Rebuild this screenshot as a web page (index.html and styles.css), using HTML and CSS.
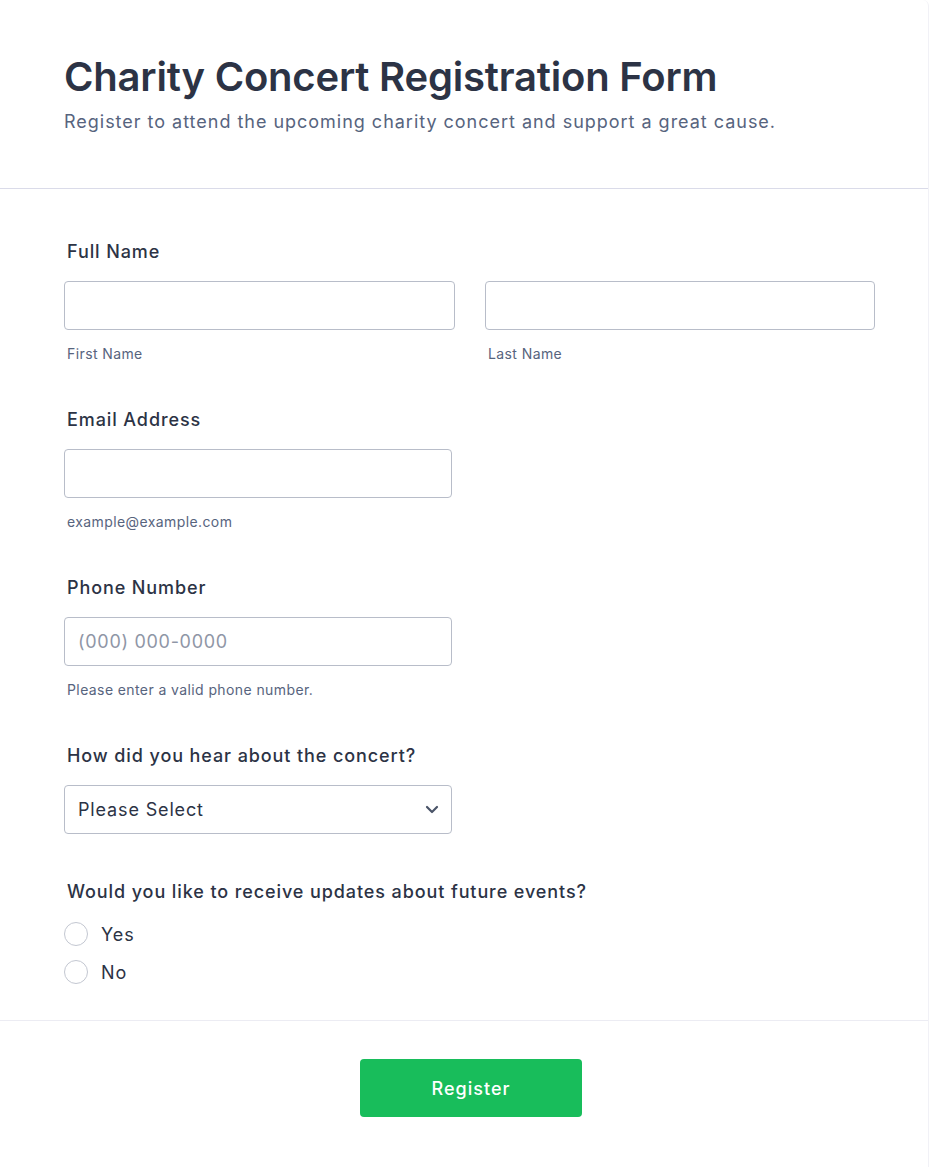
FILE: index.html
```html
<!DOCTYPE html>
<html lang="en">
<head>
<meta charset="utf-8">
<title>Charity Concert Registration Form</title>
<link rel="stylesheet" href="styles.css">
</head>
<body>
<div class="card">
  <header class="form-header">
    <h1 class="form-title">Charity Concert Registration Form</h1>
    <p class="form-subtitle">Register to attend the upcoming charity concert and support a great cause.</p>
  </header>
  <form class="form-body">
    <div class="field">
      <div class="label">Full Name</div>
      <div class="name-row">
        <div class="name-col">
          <input class="input" type="text">
          <div class="sublabel">First Name</div>
        </div>
        <div class="name-col">
          <input class="input" type="text">
          <div class="sublabel">Last Name</div>
        </div>
      </div>
    </div>
    <div class="field">
      <div class="label">Email Address</div>
      <input class="input half" type="email">
      <div class="sublabel">example@example.com</div>
    </div>
    <div class="field">
      <div class="label">Phone Number</div>
      <input class="input half" type="tel" placeholder="(000) 000-0000">
      <div class="sublabel">Please enter a valid phone number.</div>
    </div>
    <div class="field field-select">
      <div class="label">How did you hear about the concert?</div>
      <div class="select half">
        <span>Please Select</span>
        <svg class="chevron" width="14" height="9" viewBox="0 0 14 9"><path d="M2 2l5 5 5-5" fill="none" stroke="#4a5468" stroke-width="2.2" stroke-linecap="round" stroke-linejoin="round"/></svg>
      </div>
    </div>
    <div class="field field-radio">
      <div class="label">Would you like to receive updates about future events?</div>
      <div class="radios">
        <label class="radio-row"><span class="radio"></span><span>Yes</span></label>
        <label class="radio-row"><span class="radio"></span><span>No</span></label>
      </div>
    </div>
  </form>
  <footer class="form-footer">
    <button class="submit" type="button">Register</button>
  </footer>
</div>
</body>
</html>
```

FILE: styles.css
```css
html, body {
  margin: 0;
  padding: 0;
  background: #ffffff;
}
body {
  font-family: Inter, "Noto Sans", sans-serif;
  color: #2c3345;
}
.card {
  width: 929px;
  min-height: 1167px;
  box-sizing: border-box;
  border-right: 1px solid #f1f1f6;
  border-top-right-radius: 6px;
  background: #fff;
}
.form-header {
  padding: 53px 64px 54px;
  border-bottom: 1px solid #dadbe9;
}
.form-title {
  margin: 0;
  font-size: 40px;
  line-height: 48px;
  font-weight: 600;
  letter-spacing: -0.2px;
  color: #2c3345;
}
.form-subtitle {
  margin: 9px 0 0;
  font-size: 18px;
  line-height: 24px;
  font-weight: 400;
  letter-spacing: 0.98px;
  color: #57647e;
}
.form-body {
  padding: 51px 54px 0 64px;
  display: flex;
  flex-direction: column;
  border-bottom: 1px solid #ececf3;
}
.field {
  display: flex;
  flex-direction: column;
  padding-bottom: 44px;
}
.label {
  font-size: 18px;
  line-height: 24px;
  font-weight: 500;
  letter-spacing: 0.9px;
  padding-left: 3px;
  margin-bottom: 17px;
  color: #2c3345;
}
.name-row {
  display: grid;
  grid-template-columns: 391px 390px;
  column-gap: 30px;
}
.name-col {
  display: flex;
  flex-direction: column;
}
.input {
  box-sizing: border-box;
  height: 49px;
  width: 100%;
  border: 1px solid #b8bdc9;
  border-radius: 4px;
  padding: 0 13px;
  font-family: inherit;
  font-size: 18px;
  letter-spacing: 0.7px;
  color: #2c3345;
  background: #fff;
  outline: none;
}
.input::placeholder {
  color: #8f96a6;
}
.half {
  width: 388px;
}
.sublabel {
  margin-top: 14px;
  padding-left: 3px;
  font-size: 14px;
  line-height: 20px;
  letter-spacing: 0.4px;
  color: #57647e;
}
.field-select {
  padding-bottom: 46px;
}
.select {
  box-sizing: border-box;
  height: 49px;
  border: 1px solid #b8bdc9;
  border-radius: 4px;
  padding: 0 12px 0 13px;
  display: flex;
  align-items: center;
  justify-content: space-between;
  font-size: 18px;
  letter-spacing: 0.85px;
  color: #2c3345;
}
.field-radio {
  padding-bottom: 29px;
}
.field-radio .label {
  margin-bottom: 11px;
}
.radios {
  display: flex;
  flex-direction: column;
}
.radio-row {
  display: flex;
  align-items: center;
  gap: 13px;
  height: 38px;
  font-size: 18px;
  letter-spacing: 0.9px;
  color: #2c3345;
}
.radio {
  box-sizing: border-box;
  width: 24px;
  height: 24px;
  border: 1.5px solid #c3c7d1;
  border-radius: 50%;
  background: #fff;
}
.form-footer {
  display: flex;
  justify-content: center;
  padding: 38px 0 48px 14px;
}
.submit {
  width: 222px;
  height: 58px;
  border: none;
  border-radius: 4px;
  background: #18bd5b;
  color: #fff;
  font-family: inherit;
  font-size: 18px;
  font-weight: 500;
  letter-spacing: 1px;
  cursor: pointer;
}
```
